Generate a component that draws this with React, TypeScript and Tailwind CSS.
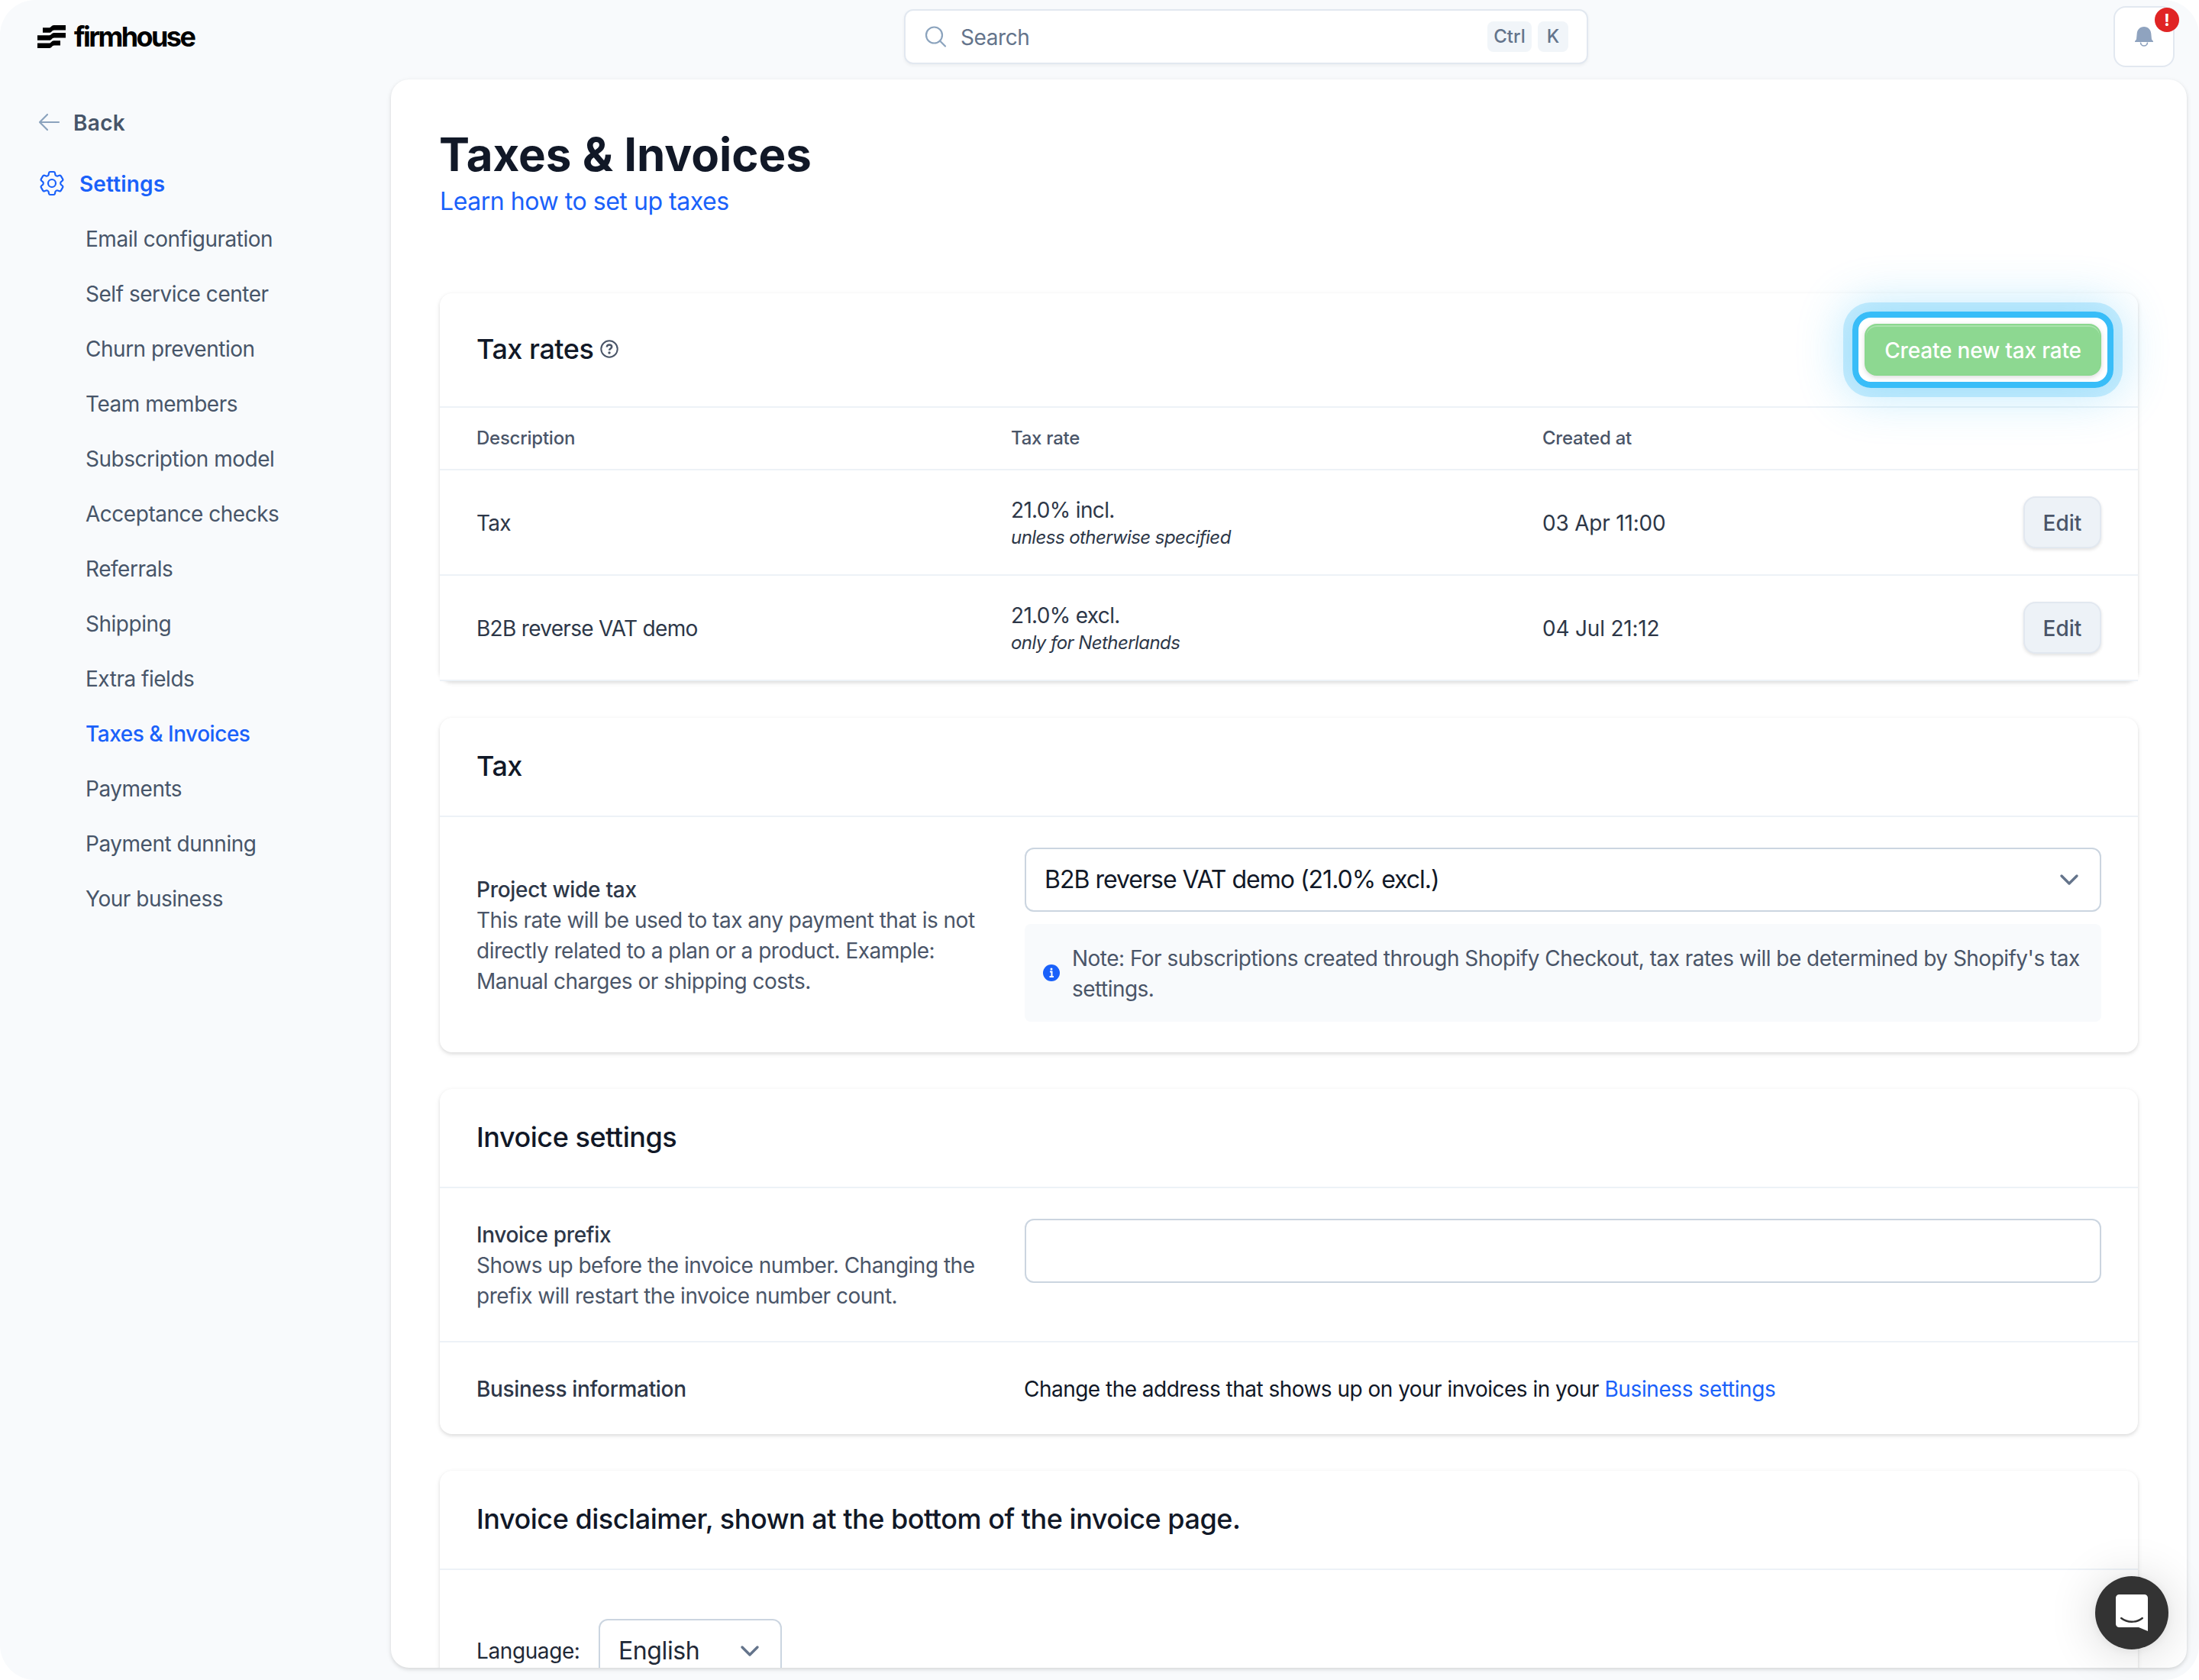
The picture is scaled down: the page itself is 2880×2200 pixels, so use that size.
import React from 'react';

const NAV_ITEMS = [
  'Email configuration',
  'Self service center',
  'Churn prevention',
  'Team members',
  'Subscription model',
  'Acceptance checks',
  'Referrals',
  'Shipping',
  'Extra fields',
  'Taxes & Invoices',
  'Payments',
  'Payment dunning',
  'Your business',
];

interface TaxRate {
  id: number;
  description: string;
  rate: string;
  note: string;
  createdAt: string;
}

const TAX_RATES: TaxRate[] = [
  { id: 1, description: 'Tax', rate: '21.0% incl.', note: 'unless otherwise specified', createdAt: '03 Apr 11:00' },
  { id: 2, description: 'B2B reverse VAT demo', rate: '21.0% excl.', note: 'only for Netherlands', createdAt: '04 Jul 21:12' },
];

const Chevron: React.FC = () => (
  <svg className="w-7 h-7 shrink-0 text-[#64748b]" viewBox="0 0 28 28" fill="none" stroke="currentColor" strokeWidth="3.4" strokeLinecap="round" strokeLinejoin="round">
    <path d="M4 9l10 10L24 9" />
  </svg>
);

const Logo: React.FC = () => (
  <div className="flex items-center pl-[49px] h-[96px] text-black">
    <svg className="w-[37px] h-[30px]" viewBox="0 0 37 30" fill="currentColor">
      <path d="M7 3.300h8.500c2 0 3-3.300 6-3.300H37v6.400H22c-3 0-3.500 3.300-6 3.300H7z" />
      <path d="M0 13.300h15.500c2.500 0 3.500-3.200 6-3.200H37v6.400H22c-3 0-3.500 3.300-6 3.300H0z" />
      <path d="M0 23.500h15.500c2.500 0 3-3.300 6-3.300H30v6.400h-8c-3 0-3 3.400-6 3.400H0z" />
    </svg>
    <span className="ml-[11px] text-[36px] leading-none font-bold tracking-[-2.6px]">firmhouse</span>
  </div>
);

const Sidebar: React.FC = () => (
  <aside className="w-[512px] shrink-0">
    <Logo />
    <a className="flex items-center h-[40px] mt-[44px] pl-[49px] text-[#475569]">
      <svg className="w-[30px] h-[26px] text-[#8ba3bd]" viewBox="0 0 30 26" fill="none" stroke="currentColor" strokeWidth="2.2" strokeLinecap="round" strokeLinejoin="round">
        <path d="M13 3L3 13l10 10M3 13h25" />
      </svg>
      <span className="ml-[17px] pt-[2px] text-[28px] font-semibold tracking-[0.3px]">Back</span>
    </a>
    <a className="flex items-center h-[40px] mt-[40px] pl-[48px] text-[#1a61fa]">
      <svg className="w-[40px] h-[40px]" viewBox="0 0 24 24" fill="none" stroke="currentColor" strokeWidth="1.3" strokeLinecap="round" strokeLinejoin="round">
        <path d="M9.594 3.94c.09-.542.56-.94 1.11-.94h2.593c.55 0 1.02.398 1.11.94l.213 1.281c.063.374.313.686.645.87.074.04.147.083.22.127.325.196.72.257 1.075.124l1.217-.456a1.125 1.125 0 0 1 1.37.49l1.296 2.247a1.125 1.125 0 0 1-.26 1.431l-1.003.827c-.293.241-.438.613-.43.992a7.723 7.723 0 0 1 0 .255c-.008.378.137.75.43.991l1.004.827c.424.35.534.955.26 1.43l-1.298 2.247a1.125 1.125 0 0 1-1.369.491l-1.217-.456c-.355-.133-.75-.072-1.076.124a6.47 6.47 0 0 1-.22.128c-.331.183-.581.495-.644.869l-.213 1.281c-.09.543-.56.94-1.11.94h-2.594c-.55 0-1.019-.398-1.11-.94l-.213-1.281c-.062-.374-.312-.686-.644-.87a6.52 6.52 0 0 1-.22-.127c-.325-.196-.72-.257-1.076-.124l-1.217.456a1.125 1.125 0 0 1-1.369-.49l-1.297-2.247a1.125 1.125 0 0 1 .26-1.431l1.004-.827c.292-.24.437-.613.43-.991a6.932 6.932 0 0 1 0-.255c.007-.38-.138-.751-.43-.992l-1.004-.827a1.125 1.125 0 0 1-.26-1.43l1.297-2.247a1.125 1.125 0 0 1 1.37-.491l1.216.456c.356.133.751.072 1.076-.124.072-.044.146-.086.22-.128.332-.183.582-.495.644-.869l.214-1.28Z" />
        <path d="M15 12a3 3 0 1 1-6 0 3 3 0 0 1 6 0Z" />
      </svg>
      <span className="ml-[16px] pt-[2px] text-[28px] font-semibold tracking-[0.15px]">Settings</span>
    </a>
    <nav className="mt-[17px] pl-[112px]">
      {NAV_ITEMS.map((item) => (
        <a
          key={item}
          className={`flex items-center h-[72px] text-[28px] tracking-[-0.48px] ${item === 'Taxes & Invoices' ? 'font-medium text-[#1a61fa]' : 'text-[#475569]'}`}
        >
          {item}
        </a>
      ))}
    </nav>
  </aside>
);

const TopBar: React.FC = () => (
  <header className="flex h-[104px] pl-[672px]">
    <div className="flex items-center w-[896px] h-[72px] mt-[12px] px-[24px] bg-white border-2 border-[#e2e8f0] rounded-[12px] shadow-[0_2px_4px_rgba(0,0,0,0.05)]">
      <svg className="w-[30px] h-[30px] text-[#8ba3bd]" viewBox="0 0 30 30" fill="none" stroke="currentColor" strokeWidth="2.2" strokeLinecap="round">
        <circle cx="13.5" cy="13" r="10.5" />
        <path d="M21 20.500l7 7" />
      </svg>
      <span className="ml-[18px] pt-px text-[28px] tracking-[-0.4px] text-[#64748b]">Search</span>
      <div className="flex gap-2 ml-auto text-[24px] font-medium text-[#64748b]">
        <kbd className="flex items-center justify-center w-[58px] h-[40px] rounded-lg bg-[#f1f5f9] font-['Inter']">Ctrl</kbd>
        <kbd className="flex items-center justify-center w-[40px] h-[40px] rounded-lg bg-[#f1f5f9] font-['Inter']">K</kbd>
      </div>
    </div>
    <button className="relative flex items-center justify-center w-[80px] h-[80px] mt-[8px] ml-auto mr-[32px] bg-white border-2 border-[#e2e8f0] rounded-[16px]">
      <svg className="w-[24px] h-[26px] text-[#8fa3bf]" viewBox="0 0 24 26" fill="currentColor">
        <path d="M12 0C6.500 0 3 4 2.700 9L2 16.500 0 19v1h24v-1l-2-2.500L21.300 9C21 4 17.500 0 12 0z" />
        <path d="M7.500 20.500a4.500 4.500 0 0 0 9 0" fill="none" stroke="currentColor" strokeWidth="1.600" />
      </svg>
      <span className="absolute top-0 -right-[8px] flex items-center justify-center w-[32px] h-[32px] rounded-full bg-[#e02424] text-white text-[22px] leading-none font-bold">!</span>
    </button>
  </header>
);

const Card: React.FC<{ title: React.ReactNode; action?: React.ReactNode; children: React.ReactNode }> = ({ title, action, children }) => (
  <section className="bg-white rounded-[16px] shadow-[0_2px_6px_rgba(0,0,0,0.1),0_2px_4px_rgba(0,0,0,0.06)]">
    <div className="flex items-center justify-between px-[48px] pt-[39px] pb-[41px] border-b-2 border-[#edf2f7]">
      <h3 className="flex items-center text-[36px] leading-[48px] font-medium tracking-[-0.47px] text-[#111827]">{title}</h3>
      {action}
    </div>
    {children}
  </section>
);

const TaxRatesCard: React.FC = () => (
  <Card
    title={
      <>
        Tax rates
        <svg className="w-[24px] h-[24px] ml-[9px]" viewBox="0 0 24 24" fill="none" stroke="#4a5568" strokeWidth="2">
          <circle cx="12" cy="12" r="10.700" />
          <path d="M8.800 9.500c0-1.900 1.400-3.100 3.200-3.100s3.200 1.100 3.200 2.900c0 2.200-3.100 2.300-3.100 4.500" strokeWidth="2.500" />
          <circle cx="12" cy="17" r="1.700" fill="#4a5568" stroke="none" />
        </svg>
      </>
    }
    action={
      <div className="relative mt-px -mb-px">
        <span className="absolute -inset-[16px] rounded-[24px] border-8 border-[#38bdf8] shadow-[0_0_0_12px_rgba(56,189,248,0.25),0_0_60px_12px_rgba(56,189,248,0.3)]" />
        <button className="relative block w-[310px] h-[68px] pt-px rounded-[16px] border-2 border-[#8bd88f] bg-[#8dd891] text-[28px] font-medium tracking-[-0.18px] text-white shadow-[inset_0_2px_0_rgba(255,255,255,0.25),0_2px_6px_rgba(0,0,0,0.15)]">
          Create new tax rate
        </button>
      </div>
    }
  >
    <div className="grid grid-cols-[700px_696px_1fr] items-center h-[82px] px-[48px] border-b-2 border-[#edf2f7] text-[24px] font-medium tracking-[-0.25px] text-[#4a5568]">
      <span>Description</span>
      <span>Tax rate</span>
      <span>Created at</span>
    </div>
    {TAX_RATES.map((rate) => (
      <div key={rate.id} className="grid grid-cols-[700px_696px_1fr_102px] items-center h-[138px] px-[48px] bg-white border-b-2 border-[#edf2f7] text-[28px] text-[#2d3748]">
        <span className="pt-[2px] tracking-[-0.7px]">{rate.description}</span>
        <div>
          <p className="leading-[40px] tracking-[-0.67px]">{rate.rate}</p>
          <p className="text-[24px] leading-[32px] italic tracking-[-0.56px]">{rate.note}</p>
        </div>
        <span className="pt-[2px] tracking-[-0.2px]">{rate.createdAt}</span>
        <button className="w-[102px] h-[68px] pt-px rounded-[16px] border-2 border-[#e2e8f0] bg-[#edf2f7] font-medium text-[#4a5568] shadow-[0_2px_4px_rgba(0,0,0,0.12)]">Edit</button>
      </div>
    ))}
  </Card>
);

const TaxCard: React.FC = () => (
  <Card title="Tax">
    <div className="grid grid-cols-[678px_1fr] gap-x-[40px] items-center px-[48px] py-[40px]">
      <div className="pt-[2px] text-[28px] leading-[40px] tracking-[-0.5px] whitespace-nowrap text-[#4a5568]">
        <p className="font-medium tracking-[-0.3px] text-[#2d3748]">Project wide tax</p>
        <p>
          This rate will be used to tax any payment that is not
          <br />
          directly related to a plan or a product. Example:
          <br />
          Manual charges or shipping costs.
        </p>
      </div>
      <div>
        <div className="flex items-center justify-between h-[84px] pl-[24px] pr-[26px] rounded-[12px] border-2 border-[#cbd5e0] text-[32px] tracking-[-1px] text-[#111827]">
          B2B reverse VAT demo (21.0% excl.)
          <Chevron />
        </div>
        <div className="flex items-center h-[128px] mt-[16px] pl-[24px] rounded-[8px] bg-[#f8fafc]">
          <svg className="w-[22px] h-[22px] shrink-0" viewBox="0 0 22 22">
            <circle cx="11" cy="11" r="11" fill="#1a61fa" />
            <path d="M9 9.500h2.500V16M8.500 16h5.500" stroke="#fff" strokeWidth="2" fill="none" />
            <circle cx="11" cy="6" r="1.500" fill="#fff" />
          </svg>
          <p className="ml-[16px] pt-px text-[28px] leading-[40px] tracking-[-0.52px] whitespace-nowrap text-[#4a5568]">
            Note: For subscriptions created through Shopify Checkout, tax rates will be determined by Shopify's tax
            <br />
            settings.
          </p>
        </div>
      </div>
    </div>
  </Card>
);

const InvoiceSettingsCard: React.FC = () => (
  <Card title="Invoice settings">
    <div className="grid grid-cols-[678px_1fr] gap-x-[40px] px-[48px] pt-[40px] pb-[39px] border-b-2 border-[#edf2f7]">
      <div className="pt-px text-[28px] leading-[40px] tracking-[-0.5px] whitespace-nowrap text-[#4a5568]">
        <p className="font-medium tracking-[-0.35px] text-[#2d3748]">Invoice prefix</p>
        <p>
          Shows up before the invoice number. Changing the
          <br />
          prefix will restart the invoice number count.
        </p>
      </div>
      <div className="h-[84px] rounded-[12px] border-2 border-[#cbd5e0]" />
    </div>
    <div className="grid grid-cols-[678px_1fr] gap-x-[39px] px-[48px] pt-[41px] pb-[39px] text-[28px] leading-[40px]">
      <p className="font-medium tracking-[-0.33px] text-[#2d3748]">Business information</p>
      <p className="tracking-[-0.52px] text-[#111827]">
        Change the address that shows up on your invoices in your <a className="tracking-[-0.4px] text-[#1a61fa]">Business settings</a>
      </p>
    </div>
  </Card>
);

const DisclaimerCard: React.FC = () => (
  <Card title="Invoice disclaimer, shown at the bottom of the invoice page.">
    <div className="flex items-center h-[212px] px-[48px]">
      <span className="w-[160px] text-[28px] tracking-[-0.4px] text-[#1f2937]">Language:</span>
      <div className="flex items-center justify-between w-[240px] h-[84px] pl-[24px] pr-[26px] rounded-[12px] border-2 border-[#cbd5e0] text-[32px] tracking-[-0.4px] text-[#1f2937]">
        English
        <Chevron />
      </div>
    </div>
  </Card>
);

export default function App() {
  return (
    <div className="relative flex w-[2880px] h-[2200px] overflow-hidden rounded-[46px] bg-[#f8fafc] font-['Inter','Liberation_Sans',sans-serif]">
      <Sidebar />
      <div className="flex-1 min-w-0">
        <TopBar />
        <main className="w-[2352px] h-[2080px] rounded-[24px] bg-white shadow-[0_2px_6px_rgba(0,0,0,0.1),0_2px_4px_rgba(0,0,0,0.06)]">
          <div className="h-full px-[64px] overflow-hidden rounded-[24px]">
            <h1 className="-ml-px pt-[58px] text-[60px] leading-[80px] font-bold text-[#111827]">Taxes &amp; Invoices</h1>
            <a className="block pt-[2px] text-[32px] leading-[40px] tracking-[-0.45px] text-[#1a61fa]">Learn how to set up taxes</a>
            <div className="flex flex-col gap-[48px] mt-[100px]">
              <TaxRatesCard />
              <TaxCard />
              <InvoiceSettingsCard />
              <DisclaimerCard />
            </div>
          </div>
        </main>
      </div>
      {/* Chat launcher */}
      <button className="absolute left-[2744px] top-[2064px] flex items-center justify-center w-[96px] h-[96px] rounded-full bg-[#333333] shadow-[0_2px_12px_rgba(0,0,0,0.06),0_4px_64px_rgba(0,0,0,0.16)]">
        <svg className="w-[42px] h-[48px]" viewBox="0 0 42 48">
          <path d="M4.500 0h33A4.500 4.500 0 0 1 42 4.500V48l-12-5H4.500A4.500 4.500 0 0 1 0 38.500v-34A4.500 4.500 0 0 1 4.500 0z" fill="#fff" />
          <path d="M7.200 31c8 6.300 19.600 6.300 27.600 0" fill="none" stroke="#333" strokeWidth="2.400" strokeLinecap="round" />
        </svg>
      </button>
    </div>
  );
}
